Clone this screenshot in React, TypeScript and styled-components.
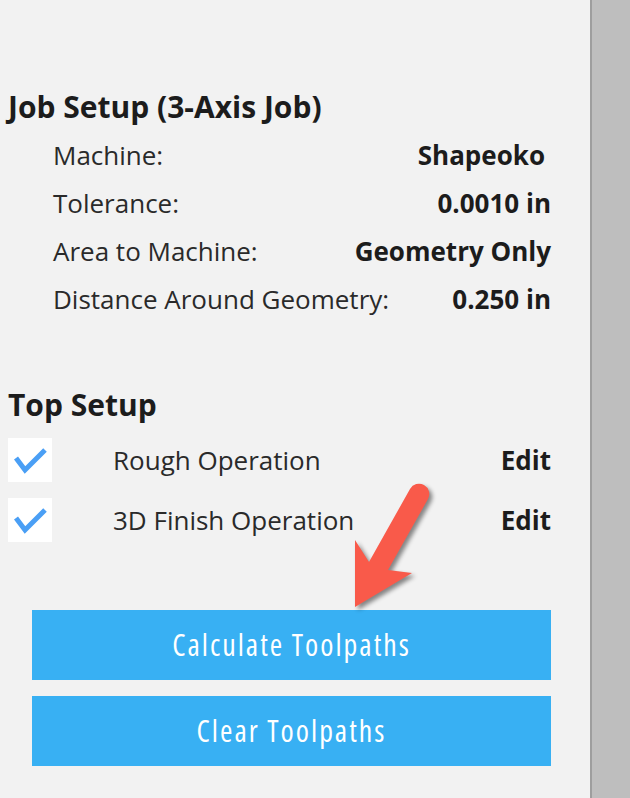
import React from 'react';
import styled, { createGlobalStyle } from 'styled-components';

const GlobalStyle = createGlobalStyle`
  html, body {
    margin: 0;
    padding: 0;
    background: #bebebe;
  }
  body {
    font-family: 'Open Sans', 'Noto Sans', sans-serif;
    color: #1e1e1e;
  }
`;

const Page = styled.div`
  display: flex;
  width: 630px;
  height: 798px;
  overflow: hidden;
  position: relative;
`;

const Panel = styled.div`
  width: 592px;
  flex: none;
  box-sizing: border-box;
  background: #f2f2f2;
  border-right: 2px solid #9e9e9e;
  padding: 89px 39px 0 8px;
  display: flex;
  flex-direction: column;
`;

const Filler = styled.div`
  flex: 1;
  background: #bebebe;
`;

const Heading = styled.h2`
  margin: 0;
  font-size: 30px;
  line-height: 36px;
  font-weight: 700;
  color: #1c1c1c;
  white-space: nowrap;
`;

const SetupList = styled.div`
  margin: 6px 0 0 45px;
  display: flex;
  flex-direction: column;
`;

const SetupRow = styled.div`
  height: 48px;
  display: flex;
  align-items: center;
  justify-content: space-between;
  font-size: 26px;
  white-space: nowrap;
`;

const Label = styled.span`
  color: #2a2a2a;
`;

const Value = styled.span<{ $pad?: number }>`
  font-weight: 700;
  color: #1c1c1c;
  padding-right: ${p => p.$pad || 0}px;
`;

const SectionGap = styled.div`
  height: 64px;
`;

const OpList = styled.div`
  margin-top: 7px;
  display: flex;
  flex-direction: column;
`;

const OpRow = styled.div`
  height: 60px;
  display: flex;
  align-items: center;
  font-size: 26px;
  white-space: nowrap;
`;

const CheckBox = styled.div`
  width: 44px;
  height: 44px;
  background: #ffffff;
  flex: none;
  display: flex;
  align-items: center;
  justify-content: center;
`;

const OpName = styled.span`
  margin-left: 61px;
  flex: 1;
  color: #2a2a2a;
`;

const EditLink = styled.span`
  font-weight: 700;
  color: #1c1c1c;
`;

const Buttons = styled.div`
  margin: 60px 0 0 24px;
  display: flex;
  flex-direction: column;
  gap: 16px;
`;

const ActionButton = styled.button`
  height: 70px;
  border: none;
  background: #38b0f3;
  color: #ffffff;
  font-family: 'Open Sans', 'Noto Sans', sans-serif;
  font-size: 30px;
  font-stretch: condensed;
  letter-spacing: 2px;
  line-height: 70px;
  padding: 0 0 4px;
  cursor: pointer;
`;

const Pointer = styled.svg`
  position: absolute;
  left: 0;
  top: 0;
  pointer-events: none;
  filter: drop-shadow(3px 3px 2px rgba(0, 0, 0, 0.45));
`;

const Check = () => (
  <svg width="44" height="44" viewBox="0 0 44 44">
    <path d="M8 20 L17 32 L37 12" fill="none" stroke="#4a9ff5" strokeWidth="5" strokeLinejoin="miter" />
  </svg>
);

const setup = [
  { label: 'Machine:', value: 'Shapeoko', pad: 6 },
  { label: 'Tolerance:', value: '0.0010 in' },
  { label: 'Area to Machine:', value: 'Geometry Only' },
  { label: 'Distance Around Geometry:', value: '0.250 in' },
];

const operations = ['Rough Operation', '3D Finish Operation'];

export default function App() {
  return (
    <Page>
      <GlobalStyle />
      <Panel>
        <Heading>Job Setup (3-Axis Job)</Heading>
        <SetupList>
          {setup.map(row => (
            <SetupRow key={row.label}>
              <Label>{row.label}</Label>
              <Value $pad={row.pad}>{row.value}</Value>
            </SetupRow>
          ))}
        </SetupList>
        <SectionGap />
        <Heading>Top Setup</Heading>
        <OpList>
          {operations.map(op => (
            <OpRow key={op}>
              <CheckBox><Check /></CheckBox>
              <OpName>{op}</OpName>
              <EditLink>Edit</EditLink>
            </OpRow>
          ))}
        </OpList>
        <Buttons>
          <ActionButton>Calculate Toolpaths</ActionButton>
          <ActionButton>Clear Toolpaths</ActionButton>
        </Buttons>
      </Panel>
      <Filler />
      <Pointer width="630" height="798" viewBox="0 0 630 798">
        <path
          d="M410 489 L369 562 L355 540 L355 607 L412 573 L388 570 L428 499 A10 10 0 0 0 410 489 Z"
          fill="#f95a4a"
        />
      </Pointer>
    </Page>
  );
}
